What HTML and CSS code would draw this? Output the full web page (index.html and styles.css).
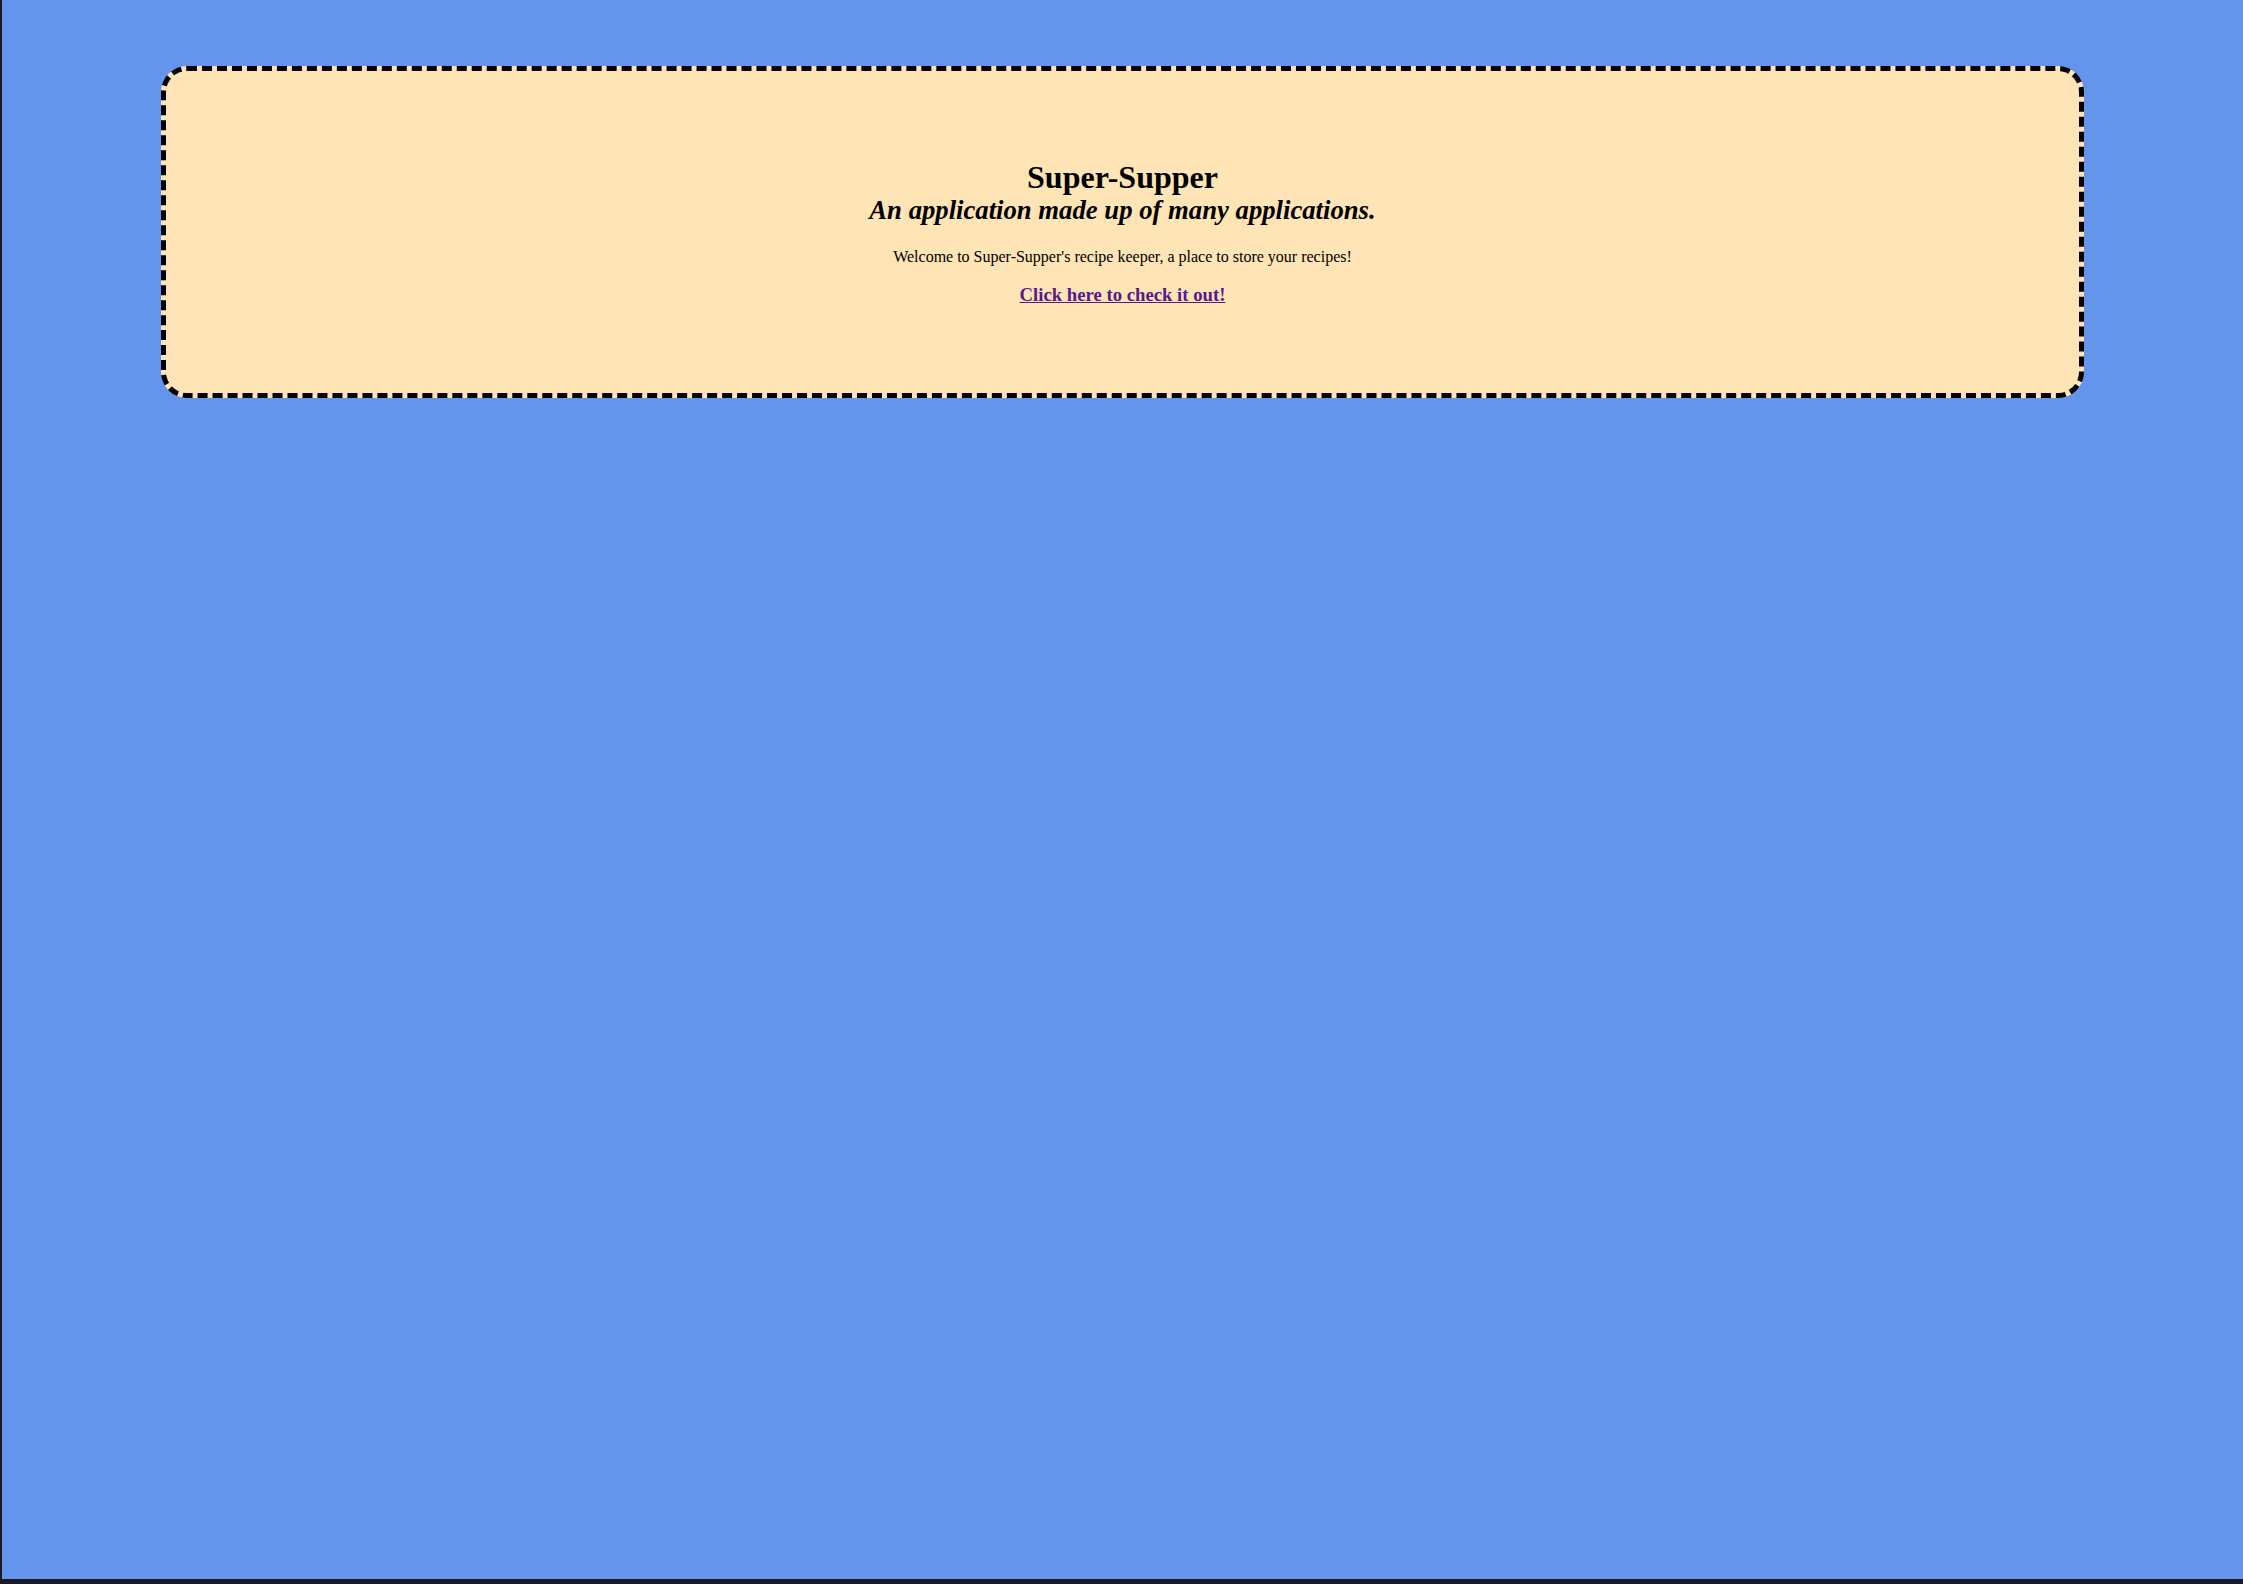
FILE: index.html
```html
<!DOCTYPE html>
<html>
<head>
<meta charset="utf-8">
<title>Super-Supper</title>
<link rel="stylesheet" href="styles.css">
</head>
<body>
<div class="screen">
  <div class="page">
    <div class="card">
      <h1 class="title">Super-Supper</h1>
      <h2 class="subtitle">An application made up of many applications.</h2>
      <p class="welcome">Welcome to Super-Supper's recipe keeper, a place to store your recipes!</p>
      <h3 class="cta"><a href="#" class="link">Click here to check it out!</a></h3>
    </div>
  </div>
  <div class="taskbar"></div>
</div>
</body>
</html>
```
FILE: styles.css
```css
html, body {
  margin: 0;
  padding: 0;
  background: #6495ed;
}
.screen {
  height: 1584px;
  display: flex;
  flex-direction: column;
  border-left: 2px solid #1c1c28;
  box-sizing: border-box;
  overflow: hidden;
}
.page {
  flex: 1;
  padding-top: 66px;
}
.card {
  box-sizing: border-box;
  width: 1923px;
  height: 332px;
  margin-left: 159px;
  background: #ffe4b5;
  border: 5px dashed #000;
  border-radius: 26px;
  text-align: center;
  font-family: "Liberation Serif", "Times New Roman", serif;
  color: #000;
  padding-top: 88px;
}
.title {
  margin: 0;
  font-size: 32px;
  font-weight: bold;
  line-height: 36px;
}
.subtitle {
  margin: 0;
  font-size: 26.7px;
  font-weight: bold;
  font-style: italic;
  line-height: 30px;
}
.welcome {
  margin: 23px 0 0;
  font-size: 16px;
  line-height: 18px;
}
.cta {
  margin: 18px 0 0;
  font-size: 18.72px;
  font-weight: bold;
  line-height: 22px;
}
.link {
  color: #551a8b;
  text-decoration: underline;
}
.taskbar {
  height: 5px;
  background: #1a1a22;
}
```
